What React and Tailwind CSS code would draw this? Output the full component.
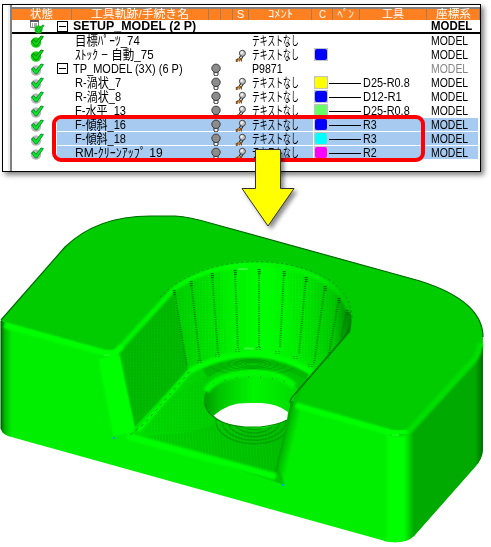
import { useLayoutEffect, useRef } from "react";

const JP = "font-['Liberation_Sans','Noto_Sans_CJK_JP',sans-serif]";

// Condenses or stretches a label to the width of its bitmap-font cell.
function Fit({ w, children, className = "" }) {
  const ref = useRef(null);
  useLayoutEffect(() => {
    const el = ref.current;
    const natural = el.scrollWidth || el.offsetWidth;
    if (natural) el.style.transform = `scaleX(${w / natural})`;
  }, [w, children]);
  return (
    <span className="block shrink-0 overflow-visible whitespace-nowrap" style={{ width: w }}>
      <span ref={ref} className={`block w-max origin-left whitespace-pre ${className}`}>{children}</span>
    </span>
  );
}

const headers = [
  ["状態", 23], ["工具軌跡/手続き名", 98], null, null, ["S", 7], ["ｺﾒﾝﾄ", 25],
  ["C", 7], ["ﾍﾟﾝ", 17], ["工具", 22], ["座標系", 35],
];

const rows = [
  { name: "SETUP_MODEL (2 P)", w: 123, group: true, bold: true, status: "sheet" },
  { name: "目標ﾊﾟｰﾂ_74", w: 65, note: "テキストなし", status: "done" },
  { name: "ｽﾄｯｸ − 自動_75", w: 79, note: "テキストなし", s: true, color: "bg-[#0000ff]", status: "done" },
  { name: "TP_MODEL (3X) (6 P)", w: 110, group: true, note: "P9871", nw: 31, bulb: true, dim: true },
  { name: "R-渦状_7", w: 46, note: "テキストなし", bulb: true, s: true, color: "bg-[#ffff00]", tool: "D25-R0.8", tw: 47 },
  { name: "R-渦状_8", w: 46, note: "テキストなし", bulb: true, s: true, color: "bg-[#0000ff]", tool: "D12-R1", tw: 39 },
  { name: "F-水平_13", w: 51, note: "テキストなし", bulb: true, s: true, color: "bg-[#66ff66]", tool: "D25-R0.8", tw: 47 },
  { name: "F-傾斜_16", w: 51, note: "テキストなし", bulb: true, s: true, color: "bg-[#0000ff]", tool: "R3", tw: 14, sel: true },
  { name: "F-傾斜_18", w: 51, note: "テキストなし", bulb: true, s: true, color: "bg-[#00ffff]", tool: "R3", tw: 14, sel: true },
  { name: "RM-ｸﾘｰﾝｱｯﾌﾟ 19", w: 88, note: "テキストなし", bulb: true, s: true, color: "bg-[#ff00ff]", tool: "R2", tw: 14, sel: true },
];

function Check({ status }) {
  if (status === "sheet") {
    return (
      <svg width="16" height="14" viewBox="0 0 16 14" className="block">
        <path d="M.5 .5h8v7h-8z" fill="#fff" stroke="#777" />
        <path d="M0 1h9" stroke="#556" strokeWidth="2" />
        <path d="M2 4h1M4 4h3M2 6h1M4 6h3" stroke="#555" />
        <circle cx="8.5" cy="9.5" r="4" fill="#19c419" />
        <path d="M5.5 9L7 8.2L8.6 10L12.5 5L14 5.4L9.2 12.6L8.2 12.6Z" fill="#00e62a" stroke="#0b8f20" strokeWidth=".8" />
      </svg>
    );
  }
  const done = status === "done";
  return (
    <svg width="16" height="14" viewBox="0 0 16 14" className="block">
      <circle cx="6" cy="8.5" r="5.2" fill={done ? "#19cf19" : "#b9b9b9"} />
      <path
        d="M1.5 7L3.9 5.6L5.8 8.4L11 2L13.4 2.6L6.8 12L5.4 12Z"
        fill={done ? "#00e00c" : "#00ee22"} stroke={done ? "#057805" : "#08862a"} strokeWidth=".9"
      />
    </svg>
  );
}

function Bulb() {
  return (
    <svg width="10" height="14" viewBox="0 0 10 14" className="block">
      <path d="M3 10h4v3l-1 .8h-2l-1-.8z" fill="#f4f4f4" stroke="#222" strokeWidth=".9" />
      <circle cx="5" cy="6.3" r="4.2" fill="#8c8c8c" stroke="#333" strokeWidth=".9" />
    </svg>
  );
}

function HandBulb() {
  return (
    <svg width="12" height="14" viewBox="0 0 12 14" className="block">
      <path d="M5.8 7.5L4.2 10M8.2 8L6.4 11" stroke="#222" strokeWidth="1.1" />
      <circle cx="7.4" cy="5.3" r="3" fill="#c4c4c4" stroke="#333" strokeWidth=".9" />
      <circle cx="6.7" cy="4.6" r="1.3" fill="#f2f2f2" />
      <path d="M.8 14v-3h1.6v-1h4.6v3.6h-1.2v-1.4h-1v1.4h-1.1v-1.4h-1v1.8z" fill="#805020" />
      <path d="M3 11h2" stroke="#e8a34c" />
    </svg>
  );
}

function Row({ r }) {
  return (
    <div className={`flex h-[14px] ${r.bold ? "border-b-2 border-black" : ""}`}>
      <div className="w-[45px] shrink-0 pl-[18px]"><Check status={r.status} /></div>
      <div className={`grid grid-cols-[152px_12px_12px_16px_63px_21px_27px_67px_51px] ${r.bold ? "text-[12px] leading-[13px]" : "text-[13px] leading-[14px]"} ${r.sel ? "h-[13px] bg-[#a6caf0]" : "h-[14px]"}`}>
        <div className="flex">
          {r.group ? (
            <span className="mt-px mr-[5px] flex size-[11px] shrink-0 items-center justify-center border border-black bg-white">
              <span className="h-px w-[7px] bg-black" />
            </span>
          ) : <span className="w-[18px] shrink-0" />}
          <Fit w={r.w} className={r.bold ? "font-bold" : ""}>{r.name}</Fit>
        </div>
        <div className="pl-[2px]">{r.bulb && <Bulb />}</div>
        <div />
        <div className="pl-[2px]">{r.s && <HandBulb />}</div>
        <div className="pl-[3px]">{r.note && <Fit w={r.nw || 47}>{r.note}</Fit>}</div>
        <div className="flex pl-px">
          {r.color && (
            <span className="h-[13px] w-[15px] border-l border-white bg-[#c4c4c4] p-px">
              <span className={`block h-[11px] w-[12px] rounded-[2px] ${r.color}`} />
            </span>
          )}
        </div>
        <div className="flex items-center">{r.tool && <span className="-ml-[4px] h-px w-[32px] shrink-0 bg-black" />}</div>
        <div className="pl-[3px]">{r.tool && <Fit w={r.tw}>{r.tool}</Fit>}</div>
        <div className="pl-[4px]">
          <Fit w={r.bold ? 41 : 37} className={r.bold ? "font-bold" : r.dim ? "text-[#858585]" : ""}>MODEL</Fit>
        </div>
      </div>
    </div>
  );
}

const ribs = [
  [174, 290, 187, 366], [191, 281, 200, 361], [212, 273, 218, 353], [235, 270, 238, 349],
  [259, 269, 259, 347], [284, 271, 280, 348], [306, 277, 299, 354], [325, 286, 314, 364],
  [339, 298, 328, 359], [347, 310, 341, 338],
];
const lowerTicks = [[200, 363], [218, 357], [238, 352], [259, 350], [278, 354], [296, 359], [311, 367]];

function Part() {
  return (
    <svg width="491" height="347" viewBox="0 200 491 347" className="block">
      <defs>
        <linearGradient id="cone" x1="175" x2="352" y1="0" y2="0" gradientUnits="userSpaceOnUse">
          <stop offset="0" stopColor="#00d000" /><stop offset=".28" stopColor="#00ed00" />
          <stop offset=".5" stopColor="#00ff00" /><stop offset=".73" stopColor="#00ea00" />
          <stop offset=".9" stopColor="#00c800" /><stop offset="1" stopColor="#007c00" />
        </linearGradient>
        <linearGradient id="rim" x1="119" x2="352" y1="0" y2="0" gradientUnits="userSpaceOnUse">
          <stop offset="0" stopColor="#00f200" /><stop offset=".5" stopColor="#00ff00" />
          <stop offset=".85" stopColor="#00ee00" /><stop offset="1" stopColor="#00c400" />
        </linearGradient>
        <linearGradient id="bore" x1="204" x2="303" y1="0" y2="0" gradientUnits="userSpaceOnUse">
          <stop offset="0" stopColor="#009a00" /><stop offset=".15" stopColor="#00c400" />
          <stop offset=".5" stopColor="#00f500" /><stop offset="1" stopColor="#00d800" />
        </linearGradient>
        <linearGradient id="leftEdge" x1="1" x2="12" y1="0" y2="0" gradientUnits="userSpaceOnUse">
          <stop offset="0" stopColor="#006c00" /><stop offset=".35" stopColor="#00b800" /><stop offset="1" stopColor="#00ee00" />
        </linearGradient>
        <linearGradient id="rightFace" x1="384" x2="484" y1="0" y2="0" gradientUnits="userSpaceOnUse">
          <stop offset="0" stopColor="#00ee00" /><stop offset=".06" stopColor="#00ff00" /><stop offset=".2" stopColor="#00ff00" />
          <stop offset=".3" stopColor="#00aa00" /><stop offset=".91" stopColor="#00aa00" /><stop offset="1" stopColor="#006800" />
        </linearGradient>
        <linearGradient id="sideWall" x1="282" x2="295" y1="434" y2="437.2" gradientUnits="userSpaceOnUse">
          <stop offset="0" stopColor="#008800" /><stop offset=".35" stopColor="#00bd00" /><stop offset="1" stopColor="#00ee00" />
        </linearGradient>
        <linearGradient id="floor" x1="145" x2="280" y1="0" y2="0" gradientUnits="userSpaceOnUse">
          <stop offset="0" stopColor="#00dc00" /><stop offset="1" stopColor="#00c400" />
        </linearGradient>
        <pattern id="mesh" width="3" height="3" patternUnits="userSpaceOnUse">
          <path d="M0 1h1M2 2h1" stroke="#009b00" strokeWidth=".7" />
        </pattern>
        <pattern id="combing" width="3" height="40" patternUnits="userSpaceOnUse" patternTransform="rotate(-4)">
          <path d="M1 0v40" stroke="#00a300" strokeWidth="1" />
        </pattern>
        <filter id="soft" x="-20%" y="-20%" width="140%" height="140%"><feGaussianBlur stdDeviation="1.1" /></filter>
        <clipPath id="floorClip"><path d="M135 435L189 370Q220 354 255 353Q290 353 312 367L293 400L275 472L278 479Z" /></clipPath>
        <clipPath id="coneClip"><path d="M172 289Q200 269 235 264Q287 258 325 279Q358 301 350 332L310 378Q252 340 188 370Z" /></clipPath>
      </defs>

      {/* Solid body and front faces */}
      <path d="M1 320L65 247Q97 216 150 216H175Q190 217 210 223L420 281Q483 301 483 337V450Q482 460 475 467L414 536Q404 545 385 541L15 438Q2 435 1 429Z" fill="#00ee00" />
      <path d="M1 320L12 327V437Q2 435 1 429Z" fill="url(#leftEdge)" />
      <path d="M384 430Q402 435 412 428L483 346V450Q482 460 475 467L414 536Q404 545 384 541Z" fill="url(#rightFace)" />
      <path d="M1 320L65 247Q97 216 150 216H175Q190 217 210 223L420 281Q483 301 483 337Q482 349 476 358L412 427Q402 433 388 429L301 405L290 399L350 330Q355 300 325 279Q287 258 235 264Q200 269 172 289L119 347Q113 351 104 350L8 323Z" fill="#00cc00" />
      <path d="M1 320L65 247Q97 216 150 216H175Q190 217 210 223L420 281Q483 301 483 337" fill="none" stroke="#006b00" strokeWidth="1.2" />

      {/* Sloping wall of the open pocket */}
      <path d="M118 350L174 289L189 369L135 427Z" fill="#00bb00" />
      <path d="M122 352L174 291L188 368L135 421Z" fill="url(#mesh)" opacity=".7" />

      {/* Pocket floor with machining texture */}
      <path d="M129 435L189 368Q220 352 255 352Q290 352 312 367L297 402L275 472L282 484Z" fill="url(#floor)" />
      <g clipPath="url(#floorClip)">
        <path d="M120 438L190 432L220 424H290V485Z" fill="url(#combing)" opacity=".55" />
        <path d="M160 405L215 370V430L145 433Z" fill="url(#mesh)" opacity=".4" />
        <g fill="none" stroke="#009c00" strokeWidth="1.6" opacity=".8">
          {[14, 20, 26, 32, 38].map((v) => <ellipse key={v} cx="254" cy="421" rx={v} ry={v * 0.6} />)}
        </g>
        <path d="M205 373Q252 342 308 375" fill="none" stroke="#00b900" strokeWidth="11" />
        <g fill="none" stroke="#008800" strokeWidth=".7" opacity=".7">
          {[8, 13, 18, 25, 33, 44].map((v) => <ellipse key={v} cx="253" cy="364" rx={v} ry={v / 4} />)}
        </g>
      </g>

      {/* Conical wall */}
      <path d="M172 289Q200 269 235 264Q287 258 325 279Q358 301 350 332L312 376Q252 335 188 370Z" fill="url(#cone)" />
      <g clipPath="url(#coneClip)">
        <path d="M170 270H220L227 350L180 373ZM285 263H355V345L300 360Z" fill="url(#mesh)" opacity=".35" />
      </g>
      <path d="M190 371Q252 338 312 372" fill="none" stroke="#00ff00" strokeWidth="6" filter="url(#soft)" />
      <path d="M119 349L174 289Q200 270 235 266Q287 260 324 281Q345 294 349 312" fill="none" stroke="url(#rim)" strokeWidth="5" filter="url(#soft)" />
      {ribs.map(([a, b, c, d], i) => (
        <g key={i} stroke="#006b00">
          <path d={`M${a} ${b}L${c} ${d}`} strokeWidth="2" strokeDasharray="1 1.2" opacity=".7" />
          <path d={`M${a} ${b}l.5 5`} strokeWidth="3" strokeDasharray="1.2 .8" opacity=".8" />
        </g>
      ))}
      {lowerTicks.map(([x, y]) => <path key={x} d={`M${x - 2} ${y - 3}v4M${x + 1} ${y - 3}v4`} stroke="#008400" strokeDasharray="1 1" />)}
      <path d="M160 297L171 287Q200 267 235 263Q287 257 326 278Q353 294 352 320" fill="none" stroke="#008500" strokeWidth=".8" strokeDasharray="2 3" />
      <path d="M238 269H248M244 348.500H254" stroke="#33ff33" strokeWidth="2" />
      <path d="M350 326Q349 332 341 341L296 393" fill="none" stroke="#007a00" strokeWidth="1.6" />

      {/* Through bore */}
      <path d="M204 404Q202 374 251 370Q286 370 298 390L291 402L287 420Q253 439 213 416Q205 411 204 404Z" fill="url(#bore)" />
      <path d="M206 391Q216 375 251 373Q280 372 294 386" fill="none" stroke="#00f800" strokeWidth="7" filter="url(#soft)" />
      <path d="M213 384Q250 370 290 383" fill="none" stroke="#007f00" strokeDasharray="1 11" />
      <path d="M213 416Q228 402 249 403H262Q278 404 288 412L287 420Q274 426 260 427H245Q222 425 213 416Z" fill="#fff" />
      <path d="M206 404Q206 412 213 416Q222 425 245 427H260Q278 425 287 420" fill="none" stroke="#008900" strokeWidth="1.1" />

      {/* Inner side of the right block */}
      <path d="M291 401L304 406L292 465L283 485L275 471L286 427Z" fill="url(#sideWall)" />
      <path d="M350 331L294 395Q290 399 290 403" fill="none" stroke="#008600" strokeWidth="1.5" />
      <path d="M276 469L283 484" stroke="#00b000" strokeWidth="2" fill="none" filter="url(#soft)" />

      {/* Rounded edge highlights */}
      <g fill="none" stroke="#00ff00" strokeLinecap="round" filter="url(#soft)">
        <path d="M7 326L105 353Q116 355 120 348" strokeWidth="6" />
        <path d="M109 357L124 434" strokeWidth="22" strokeLinecap="butt" />
        <path d="M130 437L273 476" strokeWidth="7" />
        <path d="M139 430L190 371" strokeWidth="4" />
        <path d="M298 406L388 432" strokeWidth="6" />
      </g>
      <path d="M391 432Q403 436 411 429L474 360Q480 352 480 343" fill="none" stroke="#00df00" strokeWidth="6" filter="url(#soft)" />
      <path d="M387 431Q398 435 407 431" fill="none" stroke="#00ff00" strokeWidth="6" filter="url(#soft)" />
      <path d="M104 355H110M392 435H399" stroke="#22ff22" strokeWidth="1.5" />
      <path d="M130 435L144 424L191 370" fill="none" stroke="#008b00" strokeWidth=".8" strokeDasharray="3 4" />
      <path d="M113 438h2M282 485h2" stroke="#0099ff" strokeWidth="2" />
      <path d="M1 321V429" stroke="#005d00" />
    </svg>
  );
}

export default function App() {
  return (
    <main className={`relative h-[547px] w-[491px] overflow-hidden bg-white pt-1 pl-[2px] text-black ${JP}`}>
      <section className="flex h-[168px] w-[479px] border border-black bg-white shadow-[3px_3px_5px_rgba(0,0,0,0.5)]">
        <div className="w-[7px] shrink-0 border-r-2 border-[#eeeeee]" />
        <div className="w-[470px] shrink-0 border-l-2 border-[#808080] pt-[2px]">
          <div className="grid h-[13px] grid-cols-[60px_137px_12px_12px_16px_63px_21px_27px_67px_53px] border-t-2 border-[#808080] bg-[#ff8020] text-[11px] leading-[11px] text-white">
            {headers.map((h, i) => (
              <div key={i} className="flex h-[11px] justify-center border-r border-[#a57b5a]">
                {h && <Fit w={h[1]}>{h[0]}</Fit>}
              </div>
            ))}
          </div>
          {rows.map((r) => <Row key={r.name} r={r} />)}
        </div>
      </section>
      <div className="mt-[28px] -ml-[2px]"><Part /></div>
      <div className="absolute top-[115px] left-[52px] h-[47px] w-[373px] rounded-[9px] border-4 border-[#ff0000]" />
      <svg width="62" height="90" viewBox="238 146 62 90" className="absolute top-[146px] left-[238px] drop-shadow-[3px_3px_2px_rgba(0,0,0,0.45)]">
        <path d="M255.5 149.5H280.5V188.5H294L268 226L242 188.5H255.5Z" fill="#ffff00" stroke="#333" />
      </svg>
    </main>
  );
}
